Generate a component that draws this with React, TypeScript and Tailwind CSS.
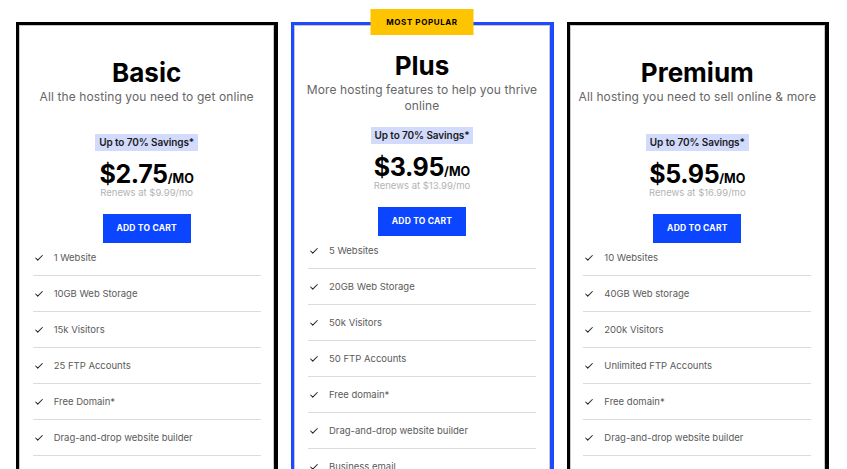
import { Check } from 'lucide-react';

interface Plan {
  name: string;
  blurb: string;
  price: string;
  renews: string;
  features: string[];
  popular?: boolean;
}

const plans: Plan[] = [
  {
    name: 'Basic',
    blurb: 'All the hosting you need to get online',
    price: '$2.75',
    renews: 'Renews at $9.99/mo',
    features: [
      '1 Website',
      '10GB Web Storage',
      '15k Visitors',
      '25 FTP Accounts',
      'Free Domain*',
      'Drag-and-drop website builder',
      'Business email',
    ],
  },
  {
    name: 'Plus',
    blurb: 'More hosting features to help you thrive online',
    price: '$3.95',
    renews: 'Renews at $13.99/mo',
    popular: true,
    features: [
      '5 Websites',
      '20GB Web Storage',
      '50k Visitors',
      '50 FTP Accounts',
      'Free domain*',
      'Drag-and-drop website builder',
      'Business email',
    ],
  },
  {
    name: 'Premium',
    blurb: 'All hosting you need to sell online & more',
    price: '$5.95',
    renews: 'Renews at $16.99/mo',
    features: [
      '10 Websites',
      '40GB Web storage',
      '200k Visitors',
      'Unlimited FTP Accounts',
      'Free domain*',
      'Drag-and-drop website builder',
      'Business email',
    ],
  },
];

function PlanCard({ plan }: { plan: Plan }) {
  const frame = plan.popular
    ? 'border-[#1c4bff] pt-[25px]'
    : 'border-black pt-[32px]';
  return (
    <div
      className={`relative border-t-[3px] border-l-[3px] border-r-[4px] border-b-[3px] ${frame} bg-white shadow-[inset_0_0_0_1px_#c8c8c8] pb-6`}
    >
      {plan.popular && (
        <div className="absolute left-1/2 -translate-x-1/2 -top-[16px] w-[103px] h-[26px] bg-[#ffc400] flex items-center justify-center text-[8px] font-bold tracking-[0.6px] text-black">
          MOST POPULAR
        </div>
      )}

      {/* Header */}
      <div className="text-center">
        <h2 className="text-[26px] leading-[32px] font-bold text-black">{plan.name}</h2>
        <p className="mx-auto w-[240px] min-h-[32px] text-[12px] leading-[16px] text-[#666] tracking-[0.1px]">
          {plan.blurb}
        </p>
      </div>

      {/* Price */}
      <div className="flex flex-col items-center">
        <div className="mt-[13px] h-[17px] px-[4px] bg-[#d3dbfd] flex items-center text-[10px] font-semibold text-[#1a1a1a] tracking-[-0.1px]">
          Up to 70% Savings*
        </div>
        <div className="mt-[13px] h-[23px] flex items-baseline text-black font-bold">
          <span className="text-[25px] leading-[20px] tracking-[-0.4px]">{plan.price}</span>
          <span className="text-[12.5px] leading-[20px]">/MO</span>
        </div>
        <div className="text-[9.5px] leading-[12px] text-[#b3b3b3]">{plan.renews}</div>
        <button className="mt-[15px] w-[88px] h-[29px] bg-[#0b45ff] text-white text-[8.5px] font-bold tracking-[0.2px]">
          ADD TO CART
        </button>
      </div>

      {/* Features */}
      <ul className="mx-auto w-[228px]">
        {plan.features.map((f) => (
          <li
            key={f}
            className="flex items-center gap-[10px] pt-[11px] first:pt-[8px] pb-[10px] leading-[14px] border-b border-[#dcdcdc] pl-[1px]"
          >
            <Check size={10} strokeWidth={2.5} className="text-[#222] shrink-0" />
            <span className="text-[9.5px] text-[#5a5a5a]">{f}</span>
          </li>
        ))}
      </ul>
    </div>
  );
}

export default function App() {
  return (
    <div
      className="min-h-screen bg-white pt-[22px] pl-[16px] pr-[18px]"
      style={{ fontFamily: 'Inter, "Noto Sans", sans-serif' }}
    >
      <div className="grid grid-cols-3 gap-[13px]">
        {plans.map((p) => (
          <PlanCard key={p.name} plan={p} />
        ))}
      </div>
    </div>
  );
}
